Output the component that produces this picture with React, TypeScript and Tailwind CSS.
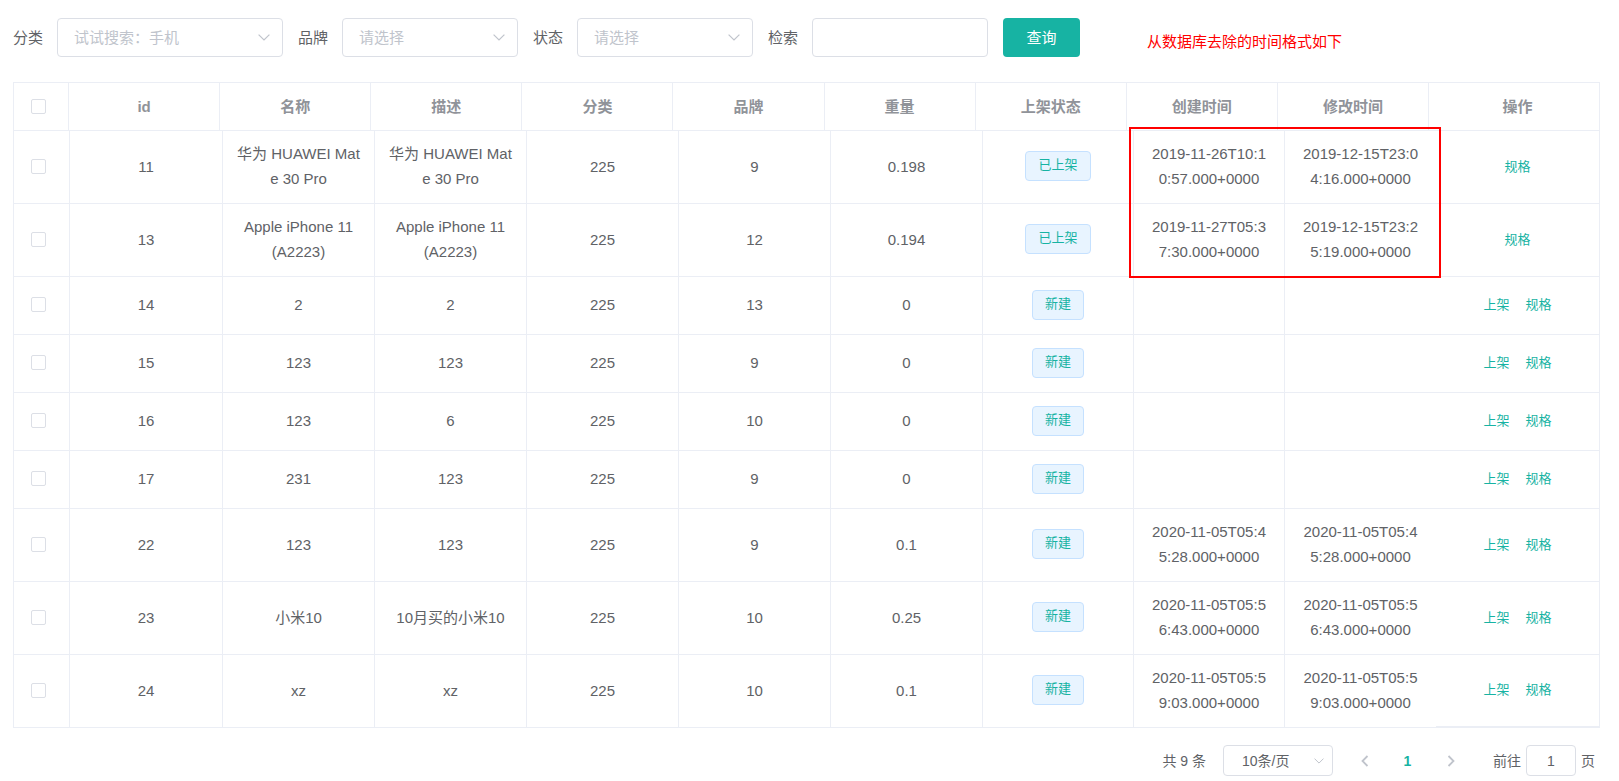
import React from 'react';

type Row = {
  id: number;
  name: string;
  desc: string;
  category: number;
  brand: number;
  weight: string;
  listed: boolean;
  created: string;
  updated: string;
};

// Line feeds mark where long values wrap inside their narrow columns.
const rows: Row[] = [
  { id: 11, name: '华为 HUAWEI Mat\ne 30 Pro', desc: '华为 HUAWEI Mat\ne 30 Pro', category: 225, brand: 9, weight: '0.198', listed: true, created: '2019-11-26T10:1\n0:57.000+0000', updated: '2019-12-15T23:0\n4:16.000+0000' },
  { id: 13, name: 'Apple iPhone 11\n(A2223)', desc: 'Apple iPhone 11\n(A2223)', category: 225, brand: 12, weight: '0.194', listed: true, created: '2019-11-27T05:3\n7:30.000+0000', updated: '2019-12-15T23:2\n5:19.000+0000' },
  { id: 14, name: '2', desc: '2', category: 225, brand: 13, weight: '0', listed: false, created: '', updated: '' },
  { id: 15, name: '123', desc: '123', category: 225, brand: 9, weight: '0', listed: false, created: '', updated: '' },
  { id: 16, name: '123', desc: '6', category: 225, brand: 10, weight: '0', listed: false, created: '', updated: '' },
  { id: 17, name: '231', desc: '123', category: 225, brand: 9, weight: '0', listed: false, created: '', updated: '' },
  { id: 22, name: '123', desc: '123', category: 225, brand: 9, weight: '0.1', listed: false, created: '2020-11-05T05:4\n5:28.000+0000', updated: '2020-11-05T05:4\n5:28.000+0000' },
  { id: 23, name: '小米10', desc: '10月买的小米10', category: 225, brand: 10, weight: '0.25', listed: false, created: '2020-11-05T05:5\n6:43.000+0000', updated: '2020-11-05T05:5\n6:43.000+0000' },
  { id: 24, name: 'xz', desc: 'xz', category: 225, brand: 10, weight: '0.1', listed: false, created: '2020-11-05T05:5\n9:03.000+0000', updated: '2020-11-05T05:5\n9:03.000+0000' },
];

const headings = ['id', '名称', '描述', '分类', '品牌', '重量', '上架状态', '创建时间', '修改时间'];

function ChevronDown({ className }: { className: string }) {
  return (
    <svg viewBox="0 0 12 7" className={className} fill="none" stroke="#c0c4cc" strokeWidth="1.2" aria-hidden="true">
      <path d="M0.6 0.6 L6 6 L11.4 0.6" />
    </svg>
  );
}

function FilterSelect({ id, label, placeholder, width }: { id: string; label: string; placeholder: string; width: string }) {
  return (
    <div className="flex items-center gap-[14px]">
      <label htmlFor={id}>{label}</label>
      <div className="relative">
        <select id={id} className={`${width} h-[39px] appearance-none rounded border border-[#dcdfe6] bg-white px-4 text-[#c0c4cc] outline-none`}>
          <option>{placeholder}</option>
        </select>
        <ChevronDown className="pointer-events-none absolute top-4 right-[13px] h-[7px] w-3" />
      </div>
    </div>
  );
}

function Check({ label }: { label: string }) {
  return (
    <input
      type="checkbox"
      aria-label={label}
      className="block size-[15px] appearance-none rounded-[2px] border border-[#dcdfe6] bg-white checked:border-[#17b3a3] checked:bg-[#17b3a3]"
    />
  );
}

function Cell({ children }: { children: React.ReactNode }) {
  return <td className="border-r border-b border-[#ebeef5] p-0 pb-[2px] whitespace-pre-line">{children}</td>;
}

function Pager({ label, d }: { label: string; d: string }) {
  return (
    <button type="button" aria-label={label} className="flex h-[31px] w-[43px] items-center justify-center">
      <svg viewBox="0 0 8 12" className="h-3 w-2" fill="none" stroke="#c0c4cc" strokeWidth="1.8" aria-hidden="true">
        <path d={d} />
      </svg>
    </button>
  );
}

export default function App() {
  return (
    <main className="bg-white pt-[18px] pr-[19px] pb-1 pl-[13px] font-['Liberation_Sans','Noto_Sans_CJK_SC',sans-serif] text-[15px] leading-[25px] text-[#606266]">
      <form className="flex items-center gap-[15px]" onSubmit={(e) => e.preventDefault()}>
        <FilterSelect id="category" label="分类" placeholder="试试搜索：手机" width="w-[226px]" />
        <FilterSelect id="brand" label="品牌" placeholder="请选择" width="w-[176px]" />
        <FilterSelect id="status" label="状态" placeholder="请选择" width="w-[176px]" />
        <div className="flex items-center gap-[14px]">
          <label htmlFor="keyword">检索</label>
          <input id="keyword" type="text" className="h-[39px] w-[176px] rounded border border-[#dcdfe6] bg-white px-4 outline-none" />
        </div>
        <button type="submit" className="h-[39px] w-[77px] rounded bg-[#17b3a3] text-white">
          查询
        </button>
        <p className="pt-2 pl-[52px] text-[#ff0000]">从数据库去除的时间格式如下</p>
      </form>

      <section className="relative mt-[25px] border-t border-l border-[#ebeef5]">
        <table className="w-full table-fixed border-separate border-spacing-0">
          <thead className="text-[#909399]">
            <tr className="h-12">
              <th className="w-[55px] border-r border-b border-[#ebeef5] p-0 pl-[17px]">
                <Check label="全选" />
              </th>
              {headings.map((h) => (
                <th key={h} className="border-r border-b border-[#ebeef5] p-0 font-bold">
                  {h}
                </th>
              ))}
              <th className="w-[171px] border-r border-b border-[#ebeef5] p-0 pl-[7px] font-bold">操作</th>
            </tr>
          </thead>
        </table>

        <table className="w-full table-fixed border-separate border-spacing-0 text-center" aria-label="商品列表">
          <colgroup>
            <col className="w-14" />
            <col className="w-[153px]" />
            <col />
            <col />
            <col />
            <col />
            <col />
            <col className="w-[151px]" />
            <col className="w-[151px]" />
            <col className="w-[151px]" />
            <col className="w-[164px]" />
          </colgroup>
          <tbody>
            {rows.map((r, i) => (
              <tr key={r.id} className={r.created ? 'h-[73px]' : 'h-[58px]'}>
                <td className="border-r border-b border-[#ebeef5] p-0 pb-[2px] pl-[17px]">
                  <Check label={`选择 ${r.id}`} />
                </td>
                <Cell>{r.id}</Cell>
                <Cell>{r.name}</Cell>
                <Cell>{r.desc}</Cell>
                <Cell>{r.category}</Cell>
                <Cell>{r.brand}</Cell>
                <Cell>{r.weight}</Cell>
                <Cell>
                  <span className="inline-block h-[30px] rounded border border-[#c5e1ff] bg-[#e8f4ff] px-3 align-middle text-[13px] leading-[26px] text-[#17b3a3]">
                    {r.listed ? '已上架' : '新建'}
                  </span>
                </Cell>
                <Cell>{r.created}</Cell>
                <td className="border-b border-[#ebeef5] p-0 pb-[2px] whitespace-pre-line">{r.updated}</td>
                <td className={`${i === rows.length - 1 ? 'border-b-2' : 'border-b'} border-r border-[#ebeef5] p-0 pb-[2px]`}>
                  <div className="flex justify-center gap-4 text-[13px] text-[#17b3a3]">
                    {!r.listed && <button type="button">上架</button>}
                    <button type="button">规格</button>
                  </div>
                </td>
              </tr>
            ))}
          </tbody>
        </table>

        <div className="pointer-events-none absolute top-11 right-[159px] h-[151px] w-[312px] border-2 border-[#ff0000]" />
      </section>

      <nav className="mt-[17px] flex items-center justify-end pr-[5px] text-sm" aria-label="分页">
        <span className="pr-[17px]">共 9 条</span>
        <div className="relative mr-[10px]">
          <select aria-label="每页条数" className="h-[31px] w-[110px] appearance-none rounded border border-[#dcdfe6] bg-white pl-[18px] outline-none">
            <option>10条/页</option>
          </select>
          <ChevronDown className="pointer-events-none absolute top-[13px] right-[9px] h-[6px] w-[10px]" />
        </div>
        <Pager label="上一页" d="M6.5 1 L1.5 6 L6.5 11" />
        <button type="button" className="h-[31px] w-[43px] font-bold text-[#17b3a3]">
          1
        </button>
        <Pager label="下一页" d="M1.5 1 L6.5 6 L1.5 11" />
        <label htmlFor="page" className="pr-[5px] pl-[21px]">
          前往
        </label>
        <input id="page" type="text" defaultValue="1" className="h-[31px] w-[50px] rounded border border-[#dcdfe6] bg-white text-center outline-none" />
        <span className="pl-[5px]">页</span>
      </nav>
    </main>
  );
}
